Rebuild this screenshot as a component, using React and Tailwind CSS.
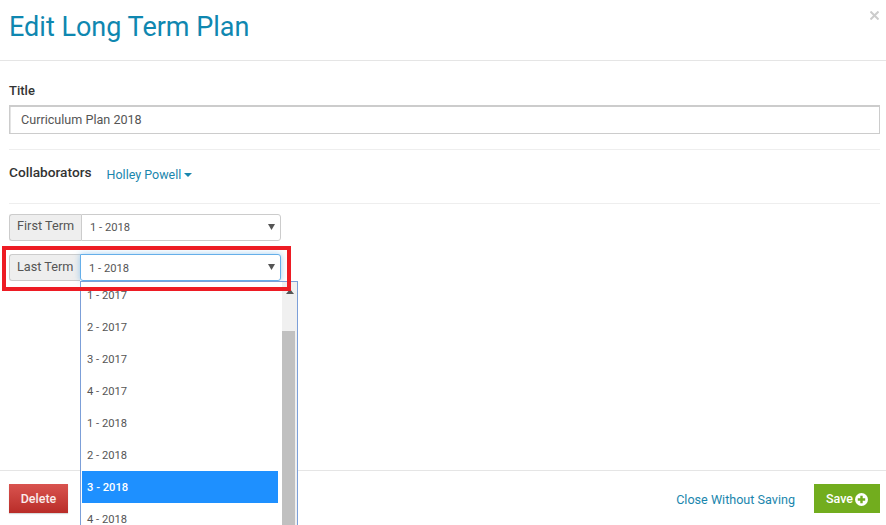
const options = ["1 - 2017", "2 - 2017", "3 - 2017", "4 - 2017", "1 - 2018", "2 - 2018", "3 - 2018", "4 - 2018"];

const Caret = () => (
  <svg width="7" height="6" viewBox="0 0 7 6" className="absolute right-[5px] top-[9px]">
    <path d="M0 0H7L3.5 6Z" fill="#555" />
  </svg>
);

const TermRow = ({ label, value, focused, className }) => (
  <div className={`flex w-[272px] h-[27px] ${className}`}>
    <div className={`h-full border border-[#ccc] border-r-0 rounded-l-[3px] bg-[#eee] text-[#555] text-[12.7px] pl-[7px] ${focused ? "w-[71px] leading-[23px]" : "w-[72px] leading-[21px]"}`}>
      {label}
    </div>
    <div className={`relative flex-1 h-full rounded-r-[3px] border bg-white text-[#555] text-[11.2px] pl-[8px] ${focused ? "leading-[28px] border-[#66afe9] shadow-[0_0_6px_rgba(102,175,233,0.6)] rounded-bl-[3px]" : "leading-[26px] border-[#ccc]"}`}>
      {value}
      <Caret />
    </div>
  </div>
);

export default function App() {
  return (
    <div className="relative w-[886px] h-[525px] overflow-hidden bg-white font-['Roboto',sans-serif] flex flex-col">
      <header className="h-[61px] shrink-0 border-b border-[#e5e5e5] pl-[9px] pt-[10px] relative">
        <h1 className="text-[27px] leading-[34px] text-[#0f87b0]">Edit Long Term Plan</h1>
        <svg width="9" height="9" viewBox="0 0 9 9" className="absolute right-[7px] top-[11px]">
          <path d="M0.5 0.5L8.5 8.5M8.5 0.5L0.5 8.5" stroke="#ccc" strokeWidth="2" />
        </svg>
      </header>

      <main className="flex-1 px-[9px] pr-[6px]">
        <label className="block mt-[22px] text-[13px] leading-[16px] font-medium text-[#333]">Title</label>
        <div className="mt-[6px] h-[29px] border border-[#ccc] border-t-2 shadow-[inset_1px_0_0_#e4e4e4] pl-[11px] text-[12.6px] leading-[25px] text-[#555]">
          Curriculum Plan 2018
        </div>
        <div className="mt-[15px] h-px bg-[#eee]" />
        <div className="h-[53px] flex items-start pt-[14px]">
          <span className="text-[13.7px] leading-[17px] font-medium text-[#333]">Collaborators</span>
          <span className="ml-[15px] mt-[2px] text-[12.5px] leading-[17px] text-[#1a86ad] flex items-center">
            Holley Powell
            <span className="ml-[3px] mt-[1px] border-x-[4px] border-x-transparent border-t-[4px] border-t-[#1a86ad]" />
          </span>
        </div>
        <div className="h-px bg-[#eee]" />
        <TermRow label="First Term" value="1 - 2018" className="mt-[10px]" />
        <TermRow label="Last Term" value="1 - 2018" focused className="mt-[13px]" />
      </main>

      <footer className="h-[55px] shrink-0 border-t border-[#e5e5e5] flex items-center justify-between pl-[9px] pr-[6px]">
        <button className="w-[59px] h-[29px] pt-[3px] bg-gradient-to-b from-[#d9534f] to-[#b92c28] text-white/90 text-[12.5px] font-medium shadow-[0_1px_1px_rgba(0,0,0,0.15)]">
          Delete
        </button>
        <div className="flex items-center gap-[19px]">
          <a className="pt-[4px] text-[12.6px] text-[#1a86ad]">Close Without Saving</a>
          <button className="w-[66px] h-[29px] pt-[3px] bg-[#72ad1e] text-white text-[12.5px] font-medium flex items-center justify-center gap-[2px]">
            Save
            <svg width="13" height="13" viewBox="0 0 13 13">
              <circle cx="6.5" cy="6.5" r="6.5" fill="#fff" />
              <path d="M5.3 2.8H7.7V5.3H10.2V7.7H7.7V10.2H5.3V7.7H2.8V5.3H5.3Z" fill="#72ad1e" />
            </svg>
          </button>
        </div>
      </footer>

      {/* open select list, sits over the footer */}
      <div className="absolute left-[80px] top-[281px] w-[218px] h-[250px] border border-[#7c9fd8] bg-white flex">
        <ul className="w-[201px] pl-px pr-[4px] -mt-[3px] text-[11.2px] text-[#555]">
          {options.map((o) => (
            <li key={o} className={`h-[32px] leading-[34px] pl-[5px] ${o === "3 - 2018" ? "bg-[#1e90ff] text-white font-medium" : ""}`}>
              {o}
            </li>
          ))}
        </ul>
        <div className="w-[15px] bg-[#f0f0f0] flex flex-col items-center">
          <svg width="8" height="5" viewBox="0 0 8 5" className="mt-[7px]"><path d="M0 5L4 0L8 5Z" fill="#555" /></svg>
          <div className="mt-[37px] flex-1 w-[13px] mr-[2px] bg-[#c0c0c0]" />
        </div>
      </div>

      {/* red annotation box */}
      <div className="absolute left-[2px] top-[246px] w-[289px] h-[45px] border-[4px] border-[#ed1c24]" />
    </div>
  );
}
